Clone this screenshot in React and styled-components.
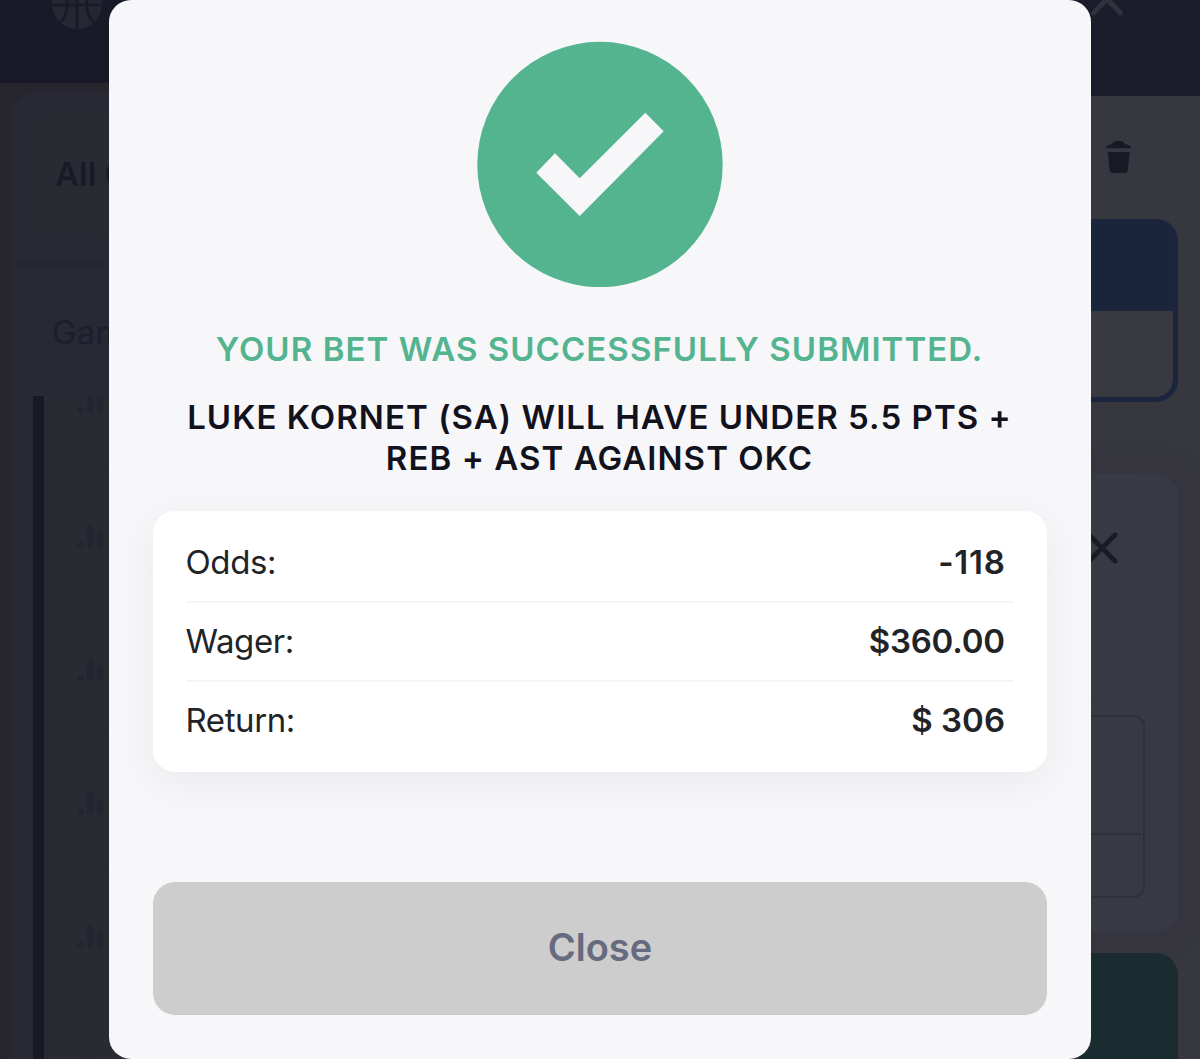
import React from "react";
import styled, { createGlobalStyle } from "styled-components";

const Global = createGlobalStyle`
  *, *::before, *::after { box-sizing: border-box; }
  body { margin: 0; background: #27272f; font-family: Inter, "Liberation Sans", sans-serif; }
`;

const Screen = styled.div`
  position: relative;
  width: 1200px;
  height: 1059px;
  overflow: hidden;
`;

const Backdrop = styled.div`
  display: grid;
  grid-template-columns: 600px 600px;
  height: 100%;
`;

/* Left: game board */
const Board = styled.div`
  display: flex;
  flex-direction: column;
  background: #27262f;
  overflow: hidden;
`;
const SportBar = styled.div`
  flex: none;
  height: 83px;
  padding-left: 52px;
  background: #191a27;
  overflow: hidden;
`;
const BallIcon = styled.svg`
  display: block;
  width: 50px;
  height: 50px;
  margin-top: -21px;
`;
const BoardCard = styled.div`
  flex: 1;
  display: flex;
  flex-direction: column;
  margin: 10px 0 0 11px;
  border-radius: 22px 22px 0 0;
  background: #272934;
`;
const FilterBar = styled.div`
  height: 172px;
  padding: 17px 22px 28px;
  border-bottom: 2px solid #242530;
`;
const Filter = styled.div`
  display: flex;
  align-items: center;
  height: 127px;
  padding: 0 0 0 22px;
  border-radius: 20px;
  background: #292b32;
  color: #191a27;
  font-size: 33px;
  font-weight: 600;
`;
const ColumnHead = styled.div`
  height: 131px;
  padding: 47px 0 0 41px;
  color: #1d1e2b;
  font-size: 33px;
  line-height: 40px;
`;
const GameTable = styled.div`
  flex: 1;
  margin-left: 22px;
  border-left: 11px solid #191925;
  background: #292b33;
  overflow: hidden;
`;
const GameRow = styled.div`
  height: 133.3px;
  padding: 57px 0 0 33px;
  border-bottom: 2px solid #272932;
  overflow: hidden;

  &:first-child {
    height: 72px;
    padding-top: 0;
  }
`;
const StatsIcon = styled.svg`
  display: block;
  width: 40px;
  height: 24px;

  ${GameRow}:first-child & { margin-top: -6px; }
`;

/* Right: bet slip */
const Slip = styled.div`
  display: flex;
  flex-direction: column;
  background: #36373f;
`;
const SlipHeader = styled.div`
  display: flex;
  justify-content: flex-end;
  height: 96px;
  padding-right: 77px;
  background: #1c1d2a;
`;
const Chevron = styled.svg`
  width: 32px;
  height: 16px;
`;
const Tools = styled.div`
  display: flex;
  justify-content: flex-end;
  height: 123px;
  padding: 44px 68px 0 0;
`;
const TrashIcon = styled.svg`
  width: 27px;
  height: 34px;
`;
const Summary = styled.div`
  height: 183px;
  margin-right: 22px;
  border: 5px solid #1b253e;
  border-radius: 22px;
  background: #1a253b;
  overflow: hidden;
`;
const SummaryBody = styled.div`
  height: 86px;
  margin-top: 87px;
  border-radius: 0 0 17px 17px;
  background: #393a41;
`;
const SlipCard = styled.div`
  display: flex;
  flex-direction: column;
  height: 460px;
  margin: 71px 22px 0 0;
  border-radius: 22px;
  background: #383a43;
  box-shadow: 0 0 22px 4px #37333e;
`;
const SlipTitle = styled.div`
  display: flex;
  justify-content: flex-end;
  height: 137px;
  padding: 59px 60px 0 0;
  border-bottom: 2px solid #373943;
`;
const CloseIcon = styled.svg`
  width: 32px;
  height: 32px;
`;
const SlipLine = styled.div`
  height: 88px;
  border-bottom: 2px solid #363842;
`;
const Stake = styled.div`
  height: 183px;
  margin: 17px 33px 0 0;
  border: 2px solid #302f3a;
  border-radius: 11px;
`;
const StakeRow = styled.div`
  height: 118px;
  margin-right: 2px;
  border-bottom: 2px solid #302f3a;
`;
const Submit = styled.div`
  flex: 1;
  margin: 20px 22px 0 0;
  border-radius: 22px 22px 0 0;
  background: #1b2c31;
`;

/* Confirmation dialog */
const Dialog = styled.section`
  position: absolute;
  top: 0;
  left: 109px;
  display: flex;
  flex-direction: column;
  align-items: center;
  width: 982px;
  height: 1059px;
  padding: 41px 44px 44px;
  border-radius: 22px;
  background: #f7f7fa;
`;
const SuccessIcon = styled.svg`
  flex: none;
  width: 246px;
  height: 246px;
`;
const Heading = styled.h2`
  margin: ${(p) => p.$top}px 0 0;
  padding-right: 1px;
  color: ${(p) => p.$color};
  font-size: 33px;
  font-weight: 600;
  line-height: 41px;
  letter-spacing: 1.05px;
  text-align: center;
  text-transform: uppercase;
`;
const Details = styled.dl`
  width: 100%;
  height: 261px;
  margin: 32px 0 0;
  padding: 13px 33px 11px;
  border-radius: 22px;
  background: #fff;
  box-shadow: 0 10px 44px rgba(20, 20, 40, 0.06);
`;
const Detail = styled.div`
  display: flex;
  align-items: center;
  justify-content: space-between;
  height: 79px;
  padding: 0 9px 2px 0;
  border-bottom: 2px solid #f5f5f7;
  color: #212326;
  font-size: 33px;

  &:last-child { border-bottom-color: transparent; }
`;
const Label = styled.dt`
  margin-left: -0.5px;
  letter-spacing: -0.4px;
`;
const Value = styled.dd`
  margin: 0 ${(p) => -p.$tracking}px 0 0;
  font-weight: 600;
  letter-spacing: ${(p) => p.$tracking}px;
`;
const CloseButton = styled.button`
  width: 100%;
  height: 133px;
  margin-top: auto;
  padding: 0 0 4px;
  border: 0;
  border-radius: 22px;
  background: #cdcdcd;
  color: #676b7f;
  font: 600 38px Inter, "Liberation Sans", sans-serif;
`;

const details = [
  ["Odds:", "-118", 0.8],
  ["Wager:", "$360.00", -0.2],
  ["Return:", "$ 306", 0],
];

function Stats() {
  return (
    <StatsIcon viewBox="0 0 40 24" fill="#242531">
      <circle cx="3.5" cy="20" r="3.3" />
      <rect x="10" y="0" width="6.5" height="23" rx="2.5" />
      <rect x="20" y="7" width="6.5" height="16" rx="2.5" />
    </StatsIcon>
  );
}

export default function App() {
  return (
    <Screen>
      <Global />
      <Backdrop aria-hidden="true">
        <Board>
          <SportBar>
            <BallIcon viewBox="0 0 50 50">
              <circle cx="25" cy="25" r="25" fill="#262732" />
              <path
                d="M25 0V50M0 26H50M7 7C18 18 18 34 7 45M43 7C32 18 32 34 43 45"
                fill="none"
                stroke="#191a27"
                strokeWidth="2.6"
              />
            </BallIcon>
          </SportBar>
          <BoardCard>
            <FilterBar>
              <Filter>All Games</Filter>
            </FilterBar>
            <ColumnHead>Game</ColumnHead>
            <GameTable>
              {[0, 1, 2, 3, 4, 5].map((n) => (
                <GameRow key={n}>
                  <Stats />
                </GameRow>
              ))}
            </GameTable>
          </BoardCard>
        </Board>
        <Slip>
          <SlipHeader>
            <Chevron viewBox="0 0 32 16">
              <path d="M2.5 13L16 -1L29.5 13" fill="none" stroke="#30313c" strokeWidth="5" strokeLinecap="round" />
            </Chevron>
          </SlipHeader>
          <Tools>
            <TrashIcon viewBox="0 0 27 34" fill="#191925">
              <path d="M1 8.3V7.2Q1.5 5.4 4.5 4.8L7 4Q8.5 1 11 1H16Q18.5 1 20 4L22.5 4.8Q25.5 5.4 26 7.2V8.3Z" />
              <path d="M2.8 12H24.5L22.8 30Q22.5 33 19.5 33H7.9Q4.9 33 4.6 30Z" />
            </TrashIcon>
          </Tools>
          <Summary>
            <SummaryBody />
          </Summary>
          <SlipCard>
            <SlipTitle>
              <CloseIcon viewBox="0 0 32 32">
                <path d="M3 3L29 29M29 3L3 29" stroke="#1a1b27" strokeWidth="5" strokeLinecap="round" />
              </CloseIcon>
            </SlipTitle>
            <SlipLine />
            <Stake>
              <StakeRow />
            </Stake>
          </SlipCard>
          <Submit />
        </Slip>
      </Backdrop>
      <Dialog role="dialog" aria-modal="true">
        <SuccessIcon viewBox="0 0 246 246">
          <circle cx="123" cy="123.5" r="122.7" fill="#53b48f" />
          <path d="M168.3 71.7L186.7 90.3L102.7 175L59.3 131.7L78 112.3L102.7 137.3Z" fill="#f7f7fa" />
        </SuccessIcon>
        <Heading $top={42} $color="#53b48f">Your bet was successfully submitted.</Heading>
        <Heading $top={27} $color="#12121d">
          Luke Kornet (SA) will have under 5.5 pts + reb + ast against OKC
        </Heading>
        <Details>
          {details.map(([label, value, tracking]) => (
            <Detail key={label}>
              <Label>{label}</Label>
              <Value $tracking={tracking}>{value}</Value>
            </Detail>
          ))}
        </Details>
        <CloseButton type="button">Close</CloseButton>
      </Dialog>
    </Screen>
  );
}
